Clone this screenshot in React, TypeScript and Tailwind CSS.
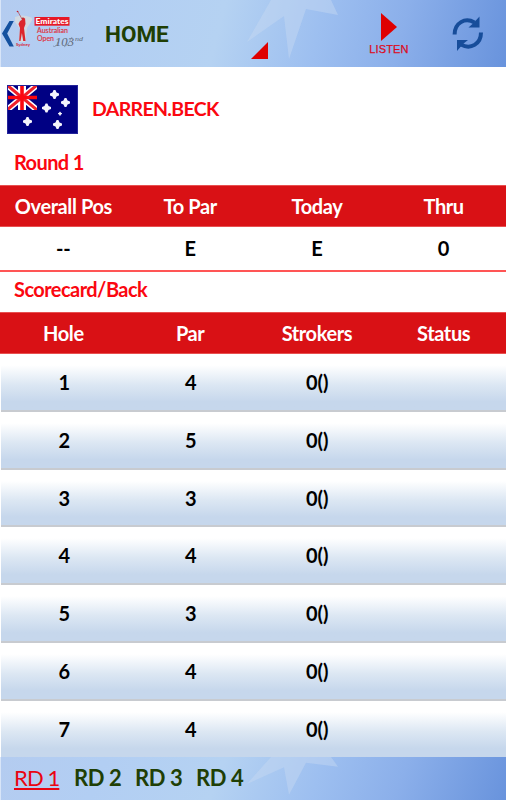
const holes = [
  { hole: 1, par: 4 },
  { hole: 2, par: 5 },
  { hole: 3, par: 3 },
  { hole: 4, par: 4 },
  { hole: 5, par: 3 },
  { hole: 6, par: 4 },
  { hole: 7, par: 4 },
];

function BarBackground() {
  return (
    <svg className="absolute inset-0 h-full w-full" viewBox="0 0 506 67" preserveAspectRatio="none" aria-hidden="true">
      <defs>
        <linearGradient id="sky" gradientUnits="userSpaceOnUse" x1="0" y1="0" x2="495" y2="125">
          <stop offset="0" stopColor="#b4ccf0" />
          <stop offset="0.2" stopColor="#b2cef3" />
          <stop offset="0.43" stopColor="#b5d2f2" />
          <stop offset="0.62" stopColor="#9dbff0" />
          <stop offset="0.78" stopColor="#8bafea" />
          <stop offset="1" stopColor="#6792dc" />
        </linearGradient>
      </defs>
      <rect width="506" height="67" fill="url(#sky)" />
      <path d="M271 0 L247 42 L284 16 L289 59 L306 9 L338 15 L331 0 Z" fill="#c8d9f1" fillOpacity="0.45" />
      <path d="M0 0V67" stroke="#d8e5f8" strokeWidth="2" />
    </svg>
  );
}

function Logo() {
  return (
    <svg className="h-[67px] w-[88px] shrink-0 font-normal" viewBox="0 0 88 67">
      <path d="M9.5 21H13.8L7.2 33.5L13.8 46.5H9.5L2 33.5Z" fill="#14519f" />
      <path d="M15 17Q22 14 30 17Q34 18 31 22L27 28L25 42H19L20 29L15 22Z" fill="#d0d9e2" />
      <path d="M17.5 11L22 19" stroke="#b55761" strokeWidth="0.8" />
      <circle cx="17.5" cy="11.5" r="0.8" fill="#c51d2c" />
      <circle cx="23" cy="19" r="1.4" fill="#be3036" />
      <path d="M20 21L25 18L25.5 24L24 28L25.5 41H23.2L21.9 33L20.5 41H19.2L20 28L18.5 24Z" fill="#dc252c" />
      <text x="16" y="46.3" fontSize="4.4" fontWeight="700" fontFamily="Lato, sans-serif" fill="#d82935" textLength="14" lengthAdjust="spacingAndGlyphs">Sydney</text>
      <rect x="34.5" y="17" width="35" height="8.7" fill="#e71927" />
      <text x="35.5" y="24.2" fontSize="8" fontWeight="900" fontFamily="Lato, sans-serif" fill="#fff" textLength="33" lengthAdjust="spacingAndGlyphs">Emirates</text>
      <text x="37" y="33.3" fontSize="6.8" fontFamily="Lato, sans-serif" fill="#df3040" stroke="#df3040" strokeWidth="0.15" textLength="31" lengthAdjust="spacingAndGlyphs">Australian</text>
      <text x="37" y="40.7" fontSize="6.8" fontFamily="Lato, sans-serif" fill="#df3040" stroke="#df3040" strokeWidth="0.15" textLength="17" lengthAdjust="spacingAndGlyphs">Open</text>
      <text x="55" y="46" fontSize="12" fontStyle="italic" fontFamily="Liberation Serif, serif" fill="#606a7a" textLength="19" lengthAdjust="spacingAndGlyphs">103</text>
      <path d="M53 46Q56 48 58 42M64 47Q69 45 72 37" fill="none" stroke="#606a7a" strokeWidth="0.5" />
      <text x="75" y="41" fontSize="6" fontStyle="italic" fontFamily="Liberation Serif, serif" fill="#606a7a" textLength="8" lengthAdjust="spacingAndGlyphs">nd</text>
    </svg>
  );
}

function Flag() {
  const stars = [
    [47.5, 9.5, 4.5],
    [58.5, 17.5, 4.5],
    [39.5, 23, 4.5],
    [50.5, 39.5, 4.5],
    [20.5, 36.5, 4.5],
    [53, 28.7, 2],
  ];
  return (
    <svg className="h-[49px] w-[71px] shrink-0" viewBox="0 0 71 49">
      <defs>
        <clipPath id="canton"><rect width="30" height="25" /></clipPath>
      </defs>
      <rect width="71" height="49" fill="#000083" />
      <g clipPath="url(#canton)">
        <path d="M0 0L30 25M30 0L0 25" stroke="#fff" strokeWidth="6" />
        <path d="M15 0V25" stroke="#fff" strokeWidth="8" />
        <path d="M0 0L30 25M30 0L0 25" stroke="#f0202a" strokeWidth="3" />
        <path d="M15 0V25M0 12.5H30" stroke="#fb0710" strokeWidth="3.6" />
      </g>
      {stars.map(([x, y, r]) => (
        <g key={`${x}-${y}`} transform={`translate(${x} ${y}) scale(${r})`}>
          <path d="M-.2-1H.2L.45-.45L1-.2V.2L.45.45L.2 1H-.2L-.45.45L-1 .2V-.2L-.45-.45Z" fill="#f4f4fc" />
        </g>
      ))}
      <rect x="0.5" y="0.5" width="70" height="48" fill="none" stroke="#24249a" />
    </svg>
  );
}

function RefreshIcon() {
  return (
    <svg className="h-[36px] w-[32px]" viewBox="0 0 32 36" fill="none">
      <path d="M2.6 18.5C2.6 7 13 1 22.5 6.5" stroke="#174d9a" strokeWidth="4" />
      <path d="M27.5 0.5V11.5H16.5L21 7.5Z" fill="#174d9a" />
      <path d="M29 16.5C29 28 18.5 34 9 28.5" stroke="#174d9a" strokeWidth="4" />
      <path d="M5 35V24H16L11 28Z" fill="#174d9a" />
    </svg>
  );
}

function Header() {
  return (
    <header className="relative h-[67px] shrink-0">
      <BarBackground />
      <div className="relative flex h-full">
        <Logo />
        <h1 className="w-[162px] pl-[17px] pt-[18px] font-[Roboto,sans-serif] text-[22.5px] leading-8 font-bold text-[#203f05]">HOME</h1>
        <svg className="mt-[42px] h-[17px] w-[18px] shrink-0" viewBox="0 0 18 17"><path d="M18 0V17H1Z" fill="#df0000" /></svg>
        <div className="ml-[101px] flex w-10 shrink-0 flex-col items-center pt-[13px]">
          <svg className="h-7 w-4" viewBox="0 0 16 28"><path d="M0 0L16 14L0 28Z" fill="#df0000" /></svg>
          <span className="mt-[2px] font-['Liberation_Sans',sans-serif] text-[11px] leading-3 font-normal tracking-[0.15px] text-[#dc0b1d] [-webkit-text-stroke:0.25px_#dc0b1d]">LISTEN</span>
        </div>
        <div className="ml-[43px] pt-[16px]"><RefreshIcon /></div>
      </div>
    </header>
  );
}

function HeadRow({ labels }: { labels: string[] }) {
  return (
    <div className="grid h-[42px] w-[507px] shrink-0 grid-cols-4 border-y border-[#e85050] bg-[#d91115] text-center leading-10 tracking-[-0.4px] text-white">
      {labels.map((label) => <div key={label}>{label}</div>)}
    </div>
  );
}

export default function App() {
  return (
    <div className="flex h-[800px] w-[506px] flex-col overflow-hidden bg-white font-[Lato,sans-serif] text-[20px] font-bold text-black">
      <Header />
      <div className="flex h-[80px] shrink-0 pt-[18px] pl-[7px]">
        <Flag />
        <div className="pt-[8px] pl-[14px] text-[19.5px] leading-8 tracking-[-0.65px] text-[#fb0710]">DARREN.BECK</div>
      </div>
      <div className="h-[38px] shrink-0 pl-[14px] leading-[31px] tracking-[-0.6px] text-[#fb0710]">Round 1</div>
      <HeadRow labels={["Overall Pos", "To Par", "Today", "Thru"]} />
      <div className="grid h-[45px] w-[507px] shrink-0 grid-cols-4 border-b-2 border-[#ff5555] text-center leading-[42px]">
        <div>--</div>
        <div>E</div>
        <div>E</div>
        <div>0</div>
      </div>
      <div className="h-[40px] shrink-0 pl-[14px] leading-[34px] tracking-[-0.55px] text-[#fb0710]">Scorecard/Back</div>
      <HeadRow labels={["Hole", "Par", "Strokers", "Status"]} />
      <div className="flex h-[403px] w-[507px] shrink-0 flex-col border-l border-white">
        {holes.map(({ hole, par }) => (
          <div key={hole} className="grid h-[57.8px] shrink-0 grid-cols-4 border-b-2 border-[#c8cbd0] bg-linear-to-b from-white from-20% via-[#dce7f3] via-55% to-[#c6d7ec] to-85% text-center leading-[56px] last:h-[56.2px] last:border-b-0">
            <div>{hole}</div>
            <div>{par}</div>
            <div>0()</div>
            <div />
          </div>
        ))}
      </div>
      <footer className="relative h-[43px] shrink-0">
        <BarBackground />
        <nav className="relative flex pt-[6px] pl-[14px] text-[22px] leading-[30px] tracking-[-0.4px] text-[#203f05]">
          <a className="w-[60px] font-normal tracking-[-0.9px] text-[#e90512] underline">RD 1</a>
          <a className="w-[61px]">RD 2</a>
          <a className="w-[61px]">RD 3</a>
          <a>RD 4</a>
        </nav>
      </footer>
    </div>
  );
}
